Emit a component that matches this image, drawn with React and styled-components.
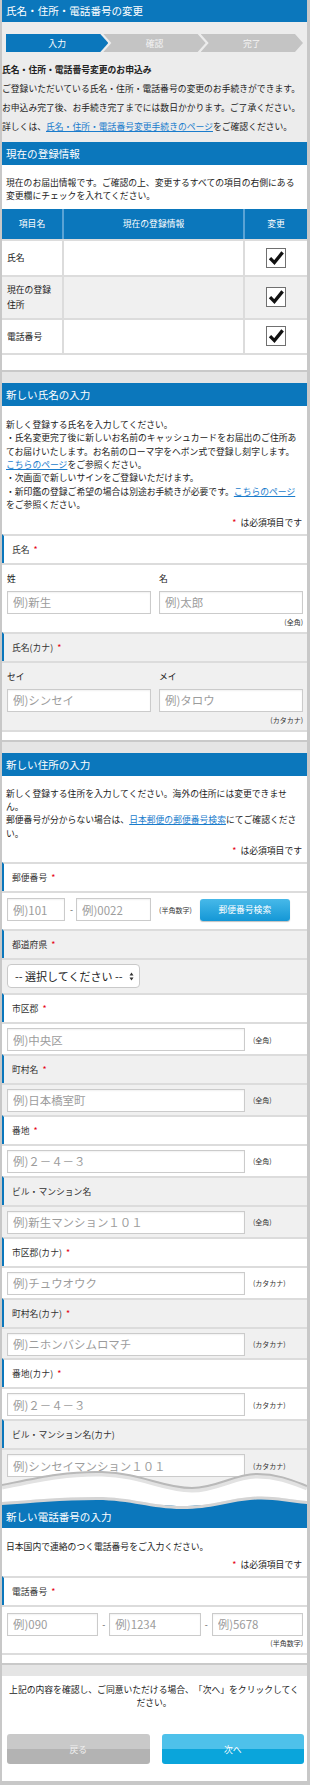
import styled, { createGlobalStyle } from "styled-components";

const BLUE = "#0b77bc";
const LINE = "#dcdcdc";
const ALT = "#f0f0f0";

const GlobalStyle = createGlobalStyle`
  * { box-sizing: border-box; }
  body { margin: 0; background: #fff; }
`;

const Page = styled.div`
  width: 310px;
  background: #e5e5e5;
  border: solid #c8c8c8;
  border-width: 0 3px 4px 2px;
  font-family: "Noto Sans CJK JP", "Noto Sans", sans-serif;
  font-size: 8.8px;
  color: #222;
  text-spacing-trim: space-all;
`;

const TitleBar = styled.h1`
  margin: 0;
  height: 22px;
  line-height: 22px;
  padding-left: 4px;
  background: ${BLUE};
  color: #fff;
  font-size: 10.56px;
  font-weight: normal;
`;

const Intro = styled.div`
  background: #ececec;
  padding: 12px 0 6px;
`;

const Steps = styled.ol`
  display: flex;
  height: 18px;
  margin: 0 4px 8px;
  padding: 0;
  list-style: none;
`;

const Step = styled.li`
  flex: 1;
  margin-left: ${(p) => (p.$first ? 0 : -5)}px;
  display: flex;
  align-items: center;
  justify-content: center;
  background: ${(p) => (p.$active ? BLUE : "#c4c4c4")};
  color: ${(p) => (p.$active ? "#fff" : "#f4f4f4")};
  clip-path: ${(p) =>
    p.$first
      ? "polygon(0 0, calc(100% - 8px) 0, 100% 50%, calc(100% - 8px) 100%, 0 100%)"
      : "polygon(0 0, calc(100% - 8px) 0, 100% 50%, calc(100% - 8px) 100%, 0 100%, 8px 50%)"};
`;

const IntroLine = styled.p`
  margin: 0;
  line-height: 19px;
  white-space: nowrap;
  font-weight: ${(p) => (p.$bold ? "bold" : "normal")};
`;

const Link = styled.a`
  color: #1a7ccc;
  text-decoration: underline;
`;

const Card = styled.section`
  background: #fff;
  padding-bottom: ${(p) => p.$pad || 0}px;
  border-bottom: ${(p) => (p.$cut ? "none" : "2px solid #c9c9c9")};
  margin-bottom: ${(p) => (p.$cut ? 0 : 11)}px;
`;

const CardHeader = styled.h2`
  margin: 0;
  height: 23px;
  line-height: 23px;
  padding-left: 4px;
  background: ${BLUE};
  color: #fff;
  font-size: 10.56px;
  font-weight: normal;
`;

const Lead = styled.div`
  padding: ${(p) => p.$top || 11}px 5px ${(p) => (p.$bottom === undefined ? 4.5 : p.$bottom)}px 4px;
  line-height: 13.4px;

  p {
    margin: 0;
  }
`;

const Required = styled.p`
  margin-top: 4px !important;
  text-align: right;
`;

const Star = styled.span`
  color: #e60012;
  margin: ${(p) => (p.$inLabel ? "0 0 0 4px" : "0 4px 0 0")};
`;

const Table = styled.table`
  width: 100%;
  margin-top: 6px;
  border-collapse: separate;
  border-spacing: 0;
  table-layout: fixed;
`;

const Tr = styled.tr`
  height: ${(p) => p.$h}px;
  background: ${(p) => (p.$alt ? ALT : "#fff")};
`;

const Th = styled.th`
  width: ${(p) => (p.$w ? `${p.$w}px` : "auto")};
  padding: 0;
  background: ${BLUE};
  color: #fff;
  font-weight: normal;
  border-left: 2px solid #5aa3d5;

  &:first-child {
    border-left: none;
  }
`;

const Td = styled.td`
  padding: 0 5px;
  line-height: 15px;
  border-top: 2px solid ${LINE};
  border-left: 2px solid ${LINE};
  border-bottom: ${(p) => (p.$last ? `2px solid ${LINE}` : "none")};
  text-align: ${(p) => (p.$center ? "center" : "left")};
  vertical-align: middle;

  &:first-child {
    border-left: none;
  }
`;

const CheckBox = styled.span`
  display: inline-block;
  width: 20px;
  height: 20px;
  border: 1px solid #707070;
  background: #fff;
  vertical-align: middle;

  svg {
    display: block;
  }
`;

const Fields = styled.div`
  border-bottom: ${(p) => (p.$open ? "none" : `2px solid ${LINE}`)};
`;

const FieldLabel = styled.div`
  display: flex;
  align-items: center;
  height: 29px;
  padding-left: 8px;
  border-top: 2px solid ${LINE};
  border-left: 2px solid ${BLUE};
  background: ${(p) => (p.$alt ? ALT : "#fff")};
  color: #333;
`;

const FieldBody = styled.div`
  padding: ${(p) => p.$pad || "4px 4px 2.9px 5px"};
  border-top: 2px solid ${LINE};
  background: ${(p) => (p.$alt ? ALT : "#fff")};
`;

const NamePair = styled.div`
  display: grid;
  grid-template-columns: 1fr 1fr;
  column-gap: 8px;
`;

const SubLabel = styled.div`
  line-height: 12px;
  margin-bottom: 6px;
`;

const Input = styled.input`
  display: block;
  width: ${(p) => (p.$w ? `${p.$w}px` : "100%")};
  height: 23px;
  margin: 0;
  padding: 0 5px;
  border: 1px solid #cbcbcb;
  border-radius: 0;
  background: #fff;
  box-shadow: inset 0 1px 2px rgba(0, 0, 0, 0.06);
  font-family: inherit;
  font-size: 11.44px;
  color: #333;
  outline: none;

  &::placeholder {
    color: #9c9c9c;
  }
`;

const Note = styled.div`
  font-size: 7px;
  line-height: 11px;
  color: #333;
  text-align: right;
  margin-top: ${(p) => p.$mt || 3}px;
`;

const InlineNote = styled.span`
  font-size: 7px;
  color: #333;
  margin-left: ${(p) => p.$ml || 8}px;
  white-space: nowrap;
`;

const InputRow = styled.div`
  display: flex;
  align-items: center;
`;

const Dash = styled.span`
  margin: 0 3px 0 5px;
  color: #555;
`;

const SearchButton = styled.button`
  width: 90px;
  height: 22px;
  margin-left: 8px;
  padding: 0;
  border: none;
  border-radius: 3px;
  background: linear-gradient(#47b9e9, #1497d6);
  box-shadow: 0 1px 1px rgba(0, 0, 0, 0.25);
  color: #fff;
  font-family: inherit;
  font-size: 8.8px;
`;

const SelectWrap = styled.div`
  position: relative;
  width: 133px;
`;

const Select = styled.select`
  display: block;
  width: 100%;
  height: 24px;
  padding: 0 0 0 7px;
  border: 1px solid #c9c9c9;
  border-radius: 4px;
  background: #fff;
  appearance: none;
  font-family: inherit;
  font-size: 11px;
  color: #222;
`;

const SelectArrows = styled.svg`
  position: absolute;
  right: 6px;
  top: 8px;
  pointer-events: none;
`;

const PhoneRow = styled.div`
  display: grid;
  grid-template-columns: 1fr auto 1fr auto 1fr;
  align-items: center;
  column-gap: 4px;
`;

const PhoneDash = styled.span`
  color: #555;
`;

const Tear = styled.div`
  position: relative;
  z-index: 1;
  height: 25px;
  background: ${ALT};

  svg {
    position: absolute;
    left: 0;
    top: -16px;
    display: block;
  }
`;

const Confirm = styled.div`
  background: #fff;
  padding: 7px 5px 17px 4px;
  line-height: 13.4px;
  text-align: center;
`;

const Buttons = styled.div`
  display: grid;
  grid-template-columns: 1fr 1fr;
  column-gap: 12px;
  margin: 25px -2px 0 1px;
`;

const ActionButton = styled.button`
  height: 30px;
  padding: 0;
  border: none;
  border-radius: 3px;
  background: ${(p) =>
    p.$primary
      ? "linear-gradient(#4ec1ea 0, #4ec1ea 50%, #0aa5db 50%, #0aa5db 100%)"
      : "linear-gradient(#c9c9c9 0, #c9c9c9 50%, #b3b3b3 50%, #b3b3b3 100%)"};
  color: ${(p) => (p.$primary ? "#fff" : "#efefef")};
  font-family: inherit;
  font-size: 8.8px;
`;

const Check = () => (
  <CheckBox>
    <svg width="18" height="18" viewBox="0 0 18 18">
      <path d="M3 9.2 L7.4 13.6 L15.6 3.4" fill="none" stroke="#111" strokeWidth="3.3" />
    </svg>
  </CheckBox>
);

const Label = ({ children, req, alt }) => (
  <FieldLabel $alt={alt}>
    {children}
    {req && <Star $inLabel>*</Star>}
  </FieldLabel>
);

const RequiredNote = () => (
  <Required>
    <Star>*</Star>は必須項目です
  </Required>
);

const addressFields = [
  { label: "市区郡", req: true, ph: "例)中央区", note: "(全角)" },
  { label: "町村名", req: true, ph: "例)日本橋室町", note: "(全角)" },
  { label: "番地", req: true, ph: "例)２－４－３", note: "(全角)" },
  { label: "ビル・マンション名", ph: "例)新生マンション１０１", note: "(全角)" },
  { label: "市区郡(カナ)", req: true, ph: "例)チュウオウク", note: "(カタカナ)" },
  { label: "町村名(カナ)", req: true, ph: "例)ニホンバシムロマチ", note: "(カタカナ)" },
  { label: "番地(カナ)", req: true, ph: "例)２－４－３", note: "(カタカナ)" },
  { label: "ビル・マンション名(カナ)", ph: "例)シンセイマンション１０１", note: "(カタカナ)" },
];

const WAVE_TOP = "M0 21 C35 14 65 7 100 8 C140 9 160 24 190 24 C215 24 232 10 255 10 C277 10 292 17 305 22";
const WAVE_BOTTOM = "M0 38 C30 36 60 33 95 33 C128 33 150 42 180 42 C210 42 225 35 248 33 C268 31 285 35 305 37";

export default function App() {
  return (
    <Page>
      <GlobalStyle />
      <TitleBar>氏名・住所・電話番号の変更</TitleBar>

      <Intro>
        <Steps>
          <Step $first $active>入力</Step>
          <Step>確認</Step>
          <Step>完了</Step>
        </Steps>
        <IntroLine $bold>氏名・住所・電話番号変更のお申込み</IntroLine>
        <IntroLine>ご登録いただいている氏名・住所・電話番号の変更のお手続きができます。</IntroLine>
        <IntroLine>お申込み完了後、お手続き完了までには数日かかります。ご了承ください。</IntroLine>
        <IntroLine>
          詳しくは、<Link href="#">氏名・住所・電話番号変更手続きのページ</Link>をご確認ください。
        </IntroLine>
      </Intro>

      <Card $pad={15}>
        <CardHeader>現在の登録情報</CardHeader>
        <Lead $bottom={0}>
          <p>現在のお届出情報です。ご確認の上、変更するすべての項目の右側にある変更欄にチェックを入れてください。</p>
        </Lead>
        <Table>
          <thead>
            <Tr $h={30}>
              <Th $w={60}>項目名</Th>
              <Th>現在の登録情報</Th>
              <Th $w={64}>変更</Th>
            </Tr>
          </thead>
          <tbody>
            <Tr $h={36}>
              <Td>氏名</Td>
              <Td />
              <Td $center><Check /></Td>
            </Tr>
            <Tr $h={43} $alt>
              <Td>現在の登録住所</Td>
              <Td />
              <Td $center><Check /></Td>
            </Tr>
            <Tr $h={37}>
              <Td $last>電話番号</Td>
              <Td $last />
              <Td $last $center><Check /></Td>
            </Tr>
          </tbody>
        </Table>
      </Card>

      <Card $pad={8}>
        <CardHeader>新しい氏名の入力</CardHeader>
        <Lead $top={12}>
          <p>新しく登録する氏名を入力してください。</p>
          <p>
            ・氏名変更完了後に新しいお名前のキャッシュカードをお届出のご住所あてお届けいたします。お名前のローマ字をヘボン式で登録し刻字します。
            <Link href="#">こちらのページ</Link>をご参照ください。
          </p>
          <p>・次画面で新しいサインをご登録いただけます。</p>
          <p>
            ・新印鑑の登録ご希望の場合は別途お手続きが必要です。<Link href="#">こちらのページ</Link>をご参照ください。
          </p>
          <RequiredNote />
        </Lead>
        <Fields>
          <Label req>氏名</Label>
          <FieldBody $pad="8px 4px 4px 5px">
            <NamePair>
              <div>
                <SubLabel>姓</SubLabel>
                <Input placeholder="例)新生" />
              </div>
              <div>
                <SubLabel>名</SubLabel>
                <Input placeholder="例)太郎" />
              </div>
            </NamePair>
            <Note>(全角)</Note>
          </FieldBody>
          <Label req alt>氏名(カナ)</Label>
          <FieldBody $alt $pad="8px 4px 4px 5px">
            <NamePair>
              <div>
                <SubLabel>セイ</SubLabel>
                <Input placeholder="例)シンセイ" />
              </div>
              <div>
                <SubLabel>メイ</SubLabel>
                <Input placeholder="例)タロウ" />
              </div>
            </NamePair>
            <Note>(カタカナ)</Note>
          </FieldBody>
        </Fields>
      </Card>

      <Card $cut>
        <CardHeader>新しい住所の入力</CardHeader>
        <Lead>
          <p>新しく登録する住所を入力してください。海外の住所には変更できません。</p>
          <p>
            郵便番号が分からない場合は、<Link href="#">日本郵便の郵便番号検索</Link>にてご確認ください。
          </p>
          <RequiredNote />
        </Lead>
        <Fields $open>
          <Label req>郵便番号</Label>
          <FieldBody $pad="5px 4px 8px 5px">
            <InputRow>
              <Input $w={58} placeholder="例)101" />
              <Dash>-</Dash>
              <Input $w={75} placeholder="例)0022" />
              <InlineNote>(半角数字)</InlineNote>
              <SearchButton>郵便番号検索</SearchButton>
            </InputRow>
          </FieldBody>
          <Label req alt>都道府県</Label>
          <FieldBody $alt $pad="4px 4px 5px 5px">
            <SelectWrap>
              <Select defaultValue="">
                <option value="">-- 選択してください --</option>
              </Select>
              <SelectArrows width="5" height="9" viewBox="0 0 5 9">
                <path d="M0.5 3.5 L2.5 0.5 L4.5 3.5Z M0.5 5.5 L2.5 8.5 L4.5 5.5Z" fill="#333" />
              </SelectArrows>
            </SelectWrap>
          </FieldBody>
          {addressFields.map((f, i) => (
            <div key={f.label}>
              <Label req={f.req} alt={i % 2 === 1}>{f.label}</Label>
              <FieldBody $alt={i % 2 === 1}>
                <InputRow>
                  <Input $w={238} placeholder={f.ph} />
                  <InlineNote>{f.note}</InlineNote>
                </InputRow>
              </FieldBody>
            </div>
          ))}
        </Fields>
      </Card>

      <Tear>
        <svg width="305" height="46" viewBox="0 0 305 46">
          <path d={`${WAVE_TOP} L305 37 C285 35 268 31 248 33 C225 35 210 42 180 42 C150 42 128 33 95 33 C60 33 30 36 0 38 Z`} fill="#fff" />
          <path d={WAVE_TOP} fill="none" stroke="#e2e2e2" strokeWidth="5" transform="translate(0 2)" />
          <path d={WAVE_TOP} fill="none" stroke="#b9b9b9" strokeWidth="2" />
          <path d={`${WAVE_BOTTOM} L305 46 L0 46 Z`} fill="#d4d4d4" />
          <path d={`${WAVE_BOTTOM} L305 46 L0 46 Z`} fill={BLUE} transform="translate(0 3)" />
        </svg>
      </Tear>

      <Card $pad={8}>
        <CardHeader>新しい電話番号の入力</CardHeader>
        <Lead $top={12}>
          <p>日本国内で連絡のつく電話番号をご入力ください。</p>
          <RequiredNote />
        </Lead>
        <Fields>
          <Label req>電話番号</Label>
          <FieldBody $pad="6px 4px 4px 5px">
            <PhoneRow>
              <Input placeholder="例)090" />
              <PhoneDash>-</PhoneDash>
              <Input placeholder="例)1234" />
              <PhoneDash>-</PhoneDash>
              <Input placeholder="例)5678" />
            </PhoneRow>
            <Note $mt={2}>(半角数字)</Note>
          </FieldBody>
        </Fields>
      </Card>

      <Confirm>
        上記の内容を確認し、ご同意いただける場合、「次へ」をクリックしてください。
        <Buttons>
          <ActionButton>戻る</ActionButton>
          <ActionButton $primary>次へ</ActionButton>
        </Buttons>
      </Confirm>
    </Page>
  );
}
